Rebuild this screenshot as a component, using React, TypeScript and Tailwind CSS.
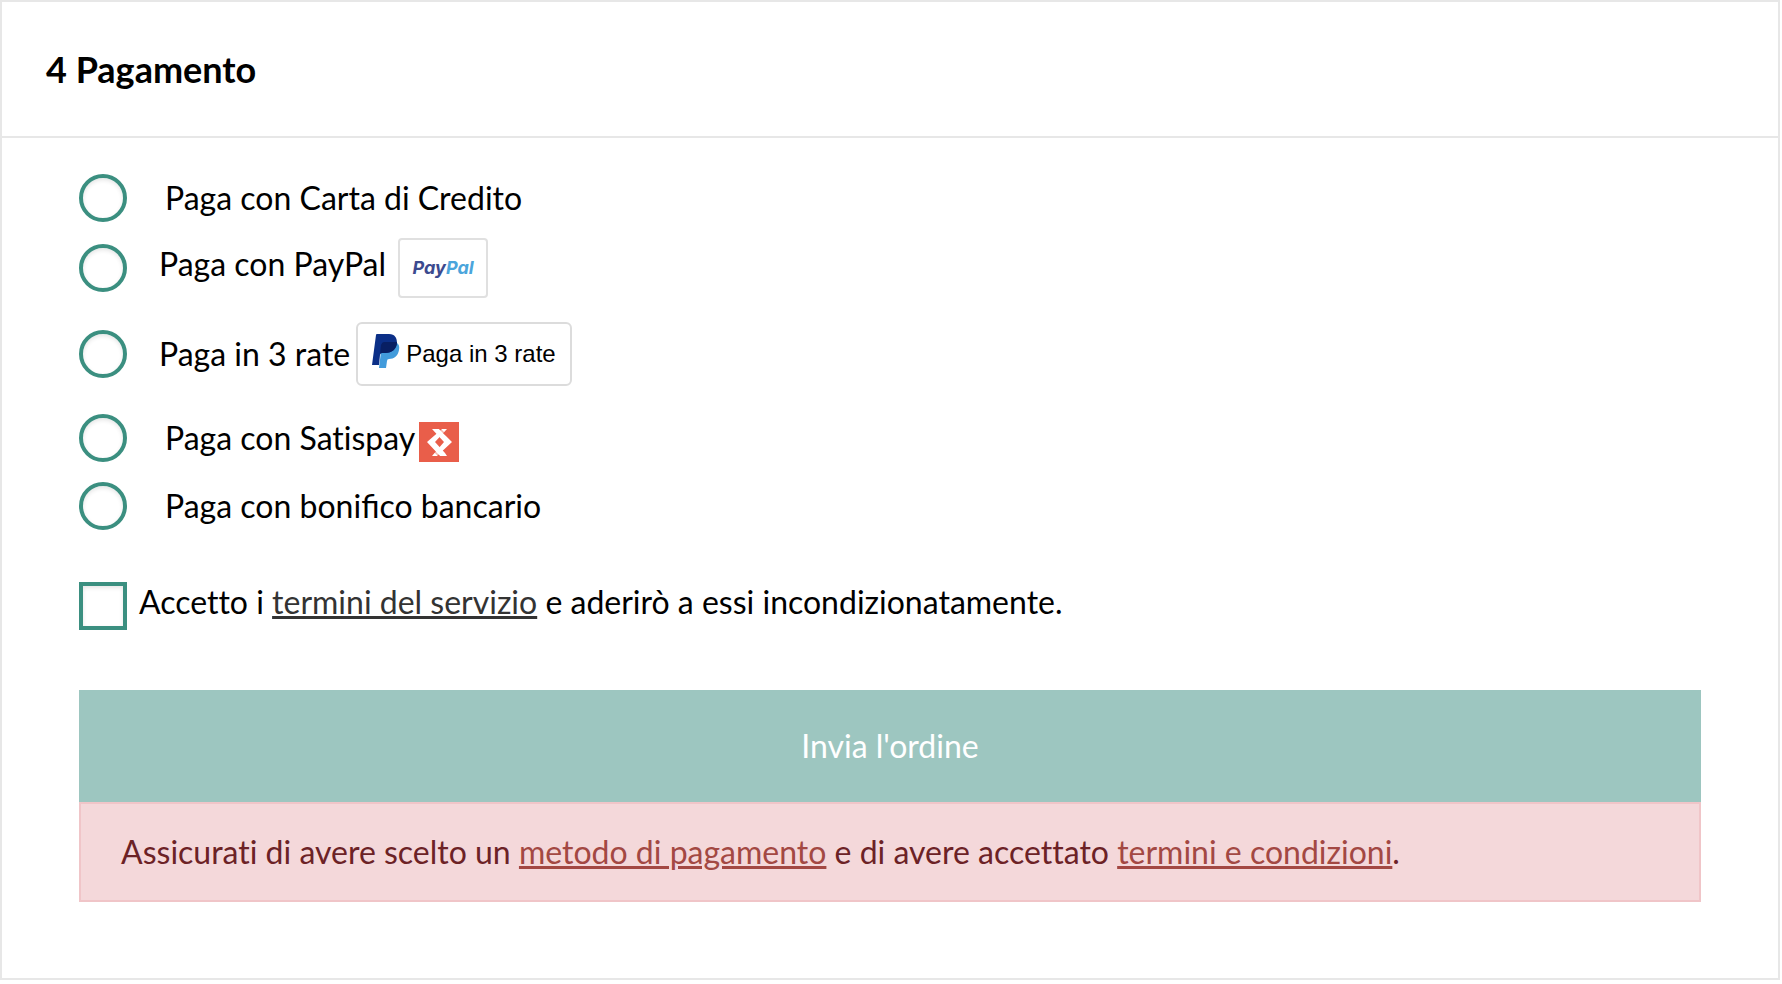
import { useState } from "react";
import type { ReactNode } from "react";

type Method = {
  id: string;
  label: string;
  row: string;
  text: string;
  badge?: ReactNode;
};

const methods: Method[] = [
  {
    id: "card",
    label: "Paga con Carta di Credito",
    row: "h-12",
    text: "pl-[38px]",
  },
  {
    id: "paypal",
    label: "Paga con PayPal",
    row: "mt-4 h-[60px]",
    text: "gap-3 pl-8 [&>span:first-child]:pb-2",
    badge: <PayPalBadge />,
  },
  {
    id: "installments",
    label: "Paga in 3 rate",
    row: "mt-6 h-16",
    text: "gap-1.5 pl-8",
    badge: <InstallmentsBadge />,
  },
  {
    id: "satispay",
    label: "Paga con Satispay",
    row: "mt-7 h-12",
    text: "gap-1 pl-[38px]",
    badge: <SatispayLogo />,
  },
  {
    id: "transfer",
    label: "Paga con bonifico bancario",
    row: "mt-5 h-12",
    text: "pl-[38px] [font-variant-ligatures:normal]",
  },
];

export default function App() {
  const [method, setMethod] = useState("");
  const [accepted, setAccepted] = useState(false);

  return (
    <section className="mr-0.5 border-2 border-[#e7e7e7] bg-white font-['Lato',sans-serif] text-[32px] leading-[48px] text-black [font-variant-ligatures:no-common-ligatures]">
      <header className="border-b-2 border-[#e7e7e7] px-11 py-11">
        <h2 className="text-4xl leading-[46px] font-bold">4 Pagamento</h2>
      </header>

      <form className="px-[77px] pt-9 pb-[76px]" onSubmit={(e) => e.preventDefault()}>
        <fieldset aria-label="Pagamento">
          {methods.map((m) => (
            <div key={m.id} className={`flex items-center ${m.row}`}>
              <input
                id={m.id}
                type="radio"
                name="payment"
                checked={method === m.id}
                onChange={() => setMethod(m.id)}
                className="size-12 shrink-0 appearance-none rounded-full border-4 border-[#3b8f80] shadow-[inset_0_2px_4px_rgba(0,0,0,0.1)] checked:bg-[#3b8f80]"
              />
              <label htmlFor={m.id} className={`flex items-center ${m.text}`}>
                <span>{m.label}</span>
                {m.badge}
              </label>
            </div>
          ))}
        </fieldset>

        <div className="mt-12 flex items-center gap-3">
          <input
            id="terms"
            type="checkbox"
            checked={accepted}
            onChange={(e) => setAccepted(e.target.checked)}
            className="size-12 shrink-0 appearance-none border-4 border-[#3b8f80] shadow-[inset_0_2px_4px_rgba(0,0,0,0.1)] checked:bg-[#3b8f80]"
          />
          <label htmlFor="terms" className="pb-2">
            Accetto i{" "}
            <a href="#termini" className="text-[#333] underline decoration-[3px]">
              termini del servizio
            </a>{" "}
            e aderirò a essi incondizionatamente.
          </label>
        </div>

        <button type="submit" className="mt-14 block w-full bg-[#9dc6c0] py-8 text-white">
          Invia l'ordine
        </button>
        <p className="border-2 border-[#f0c5c8] bg-[#f4d8da] px-10 py-6 text-[#6c2226]">
          Assicurati di avere scelto un{" "}
          <a href="#pagamento" className="text-[#a34843] underline decoration-[3px]">
            metodo di pagamento
          </a>{" "}
          e di avere accettato{" "}
          <a href="#condizioni" className="text-[#a34843] underline decoration-[3px]">
            termini e condizioni
          </a>
          .
        </p>
      </form>
    </section>
  );
}

function PayPalBadge() {
  return (
    <span className="flex h-[60px] w-[90px] items-center justify-center rounded-sm border-2 border-[#e0e0e0] font-['Inter',sans-serif] text-lg leading-6 font-bold text-[#3b4a8f] italic">
      Pay<span className="text-[#4ba5dc]">Pal</span>
    </span>
  );
}

function InstallmentsBadge() {
  return (
    <span className="flex h-16 items-center gap-1.5 rounded-md border-2 border-[#dcdcdc] px-3.5 font-['Liberation_Sans',sans-serif] text-2xl">
      <svg viewBox="0 0 28 34" className="mb-1.5 h-[34px] w-7" aria-hidden>
        <path
          d="M10 9h15q3 2 2 7c-1 6-5 9-10 9q-2 0-2 2l-1 7H7z"
          fill="#429bdb"
        />
        <path
          d="M5 0h12c6 0 8 4 8 9-1 7-6 10-12 10h-3q-2 0-2 2L7 31H0L4 1Q4 0 5 0z"
          fill="#0b2f87"
        />
        <path d="M12 8h13c0 7-5 11-12 11h-3q-1 0-2 1l1-9q1-3 3-3z" fill="#081f63" />
      </svg>
      Paga in 3 rate
    </span>
  );
}

function SatispayLogo() {
  return (
    <svg viewBox="0 0 40 40" className="mt-2 size-10" aria-hidden>
      <path fill="#e95e4a" d="M0 0h40v40H0z" />
      {/* two interlaced chevrons */}
      <path fill="#fff" d="M28 7h-5L8 20l13 14h7l-2-3-10-11z" />
      <path fill="#fff" d="M13 7h7l13 13-15 14h-5l12-14z" />
      <path
        stroke="#e95e4a"
        strokeOpacity={0.45}
        strokeWidth={1.5}
        d="M20 6l7 7M21 35l-7-7"
      />
    </svg>
  );
}
